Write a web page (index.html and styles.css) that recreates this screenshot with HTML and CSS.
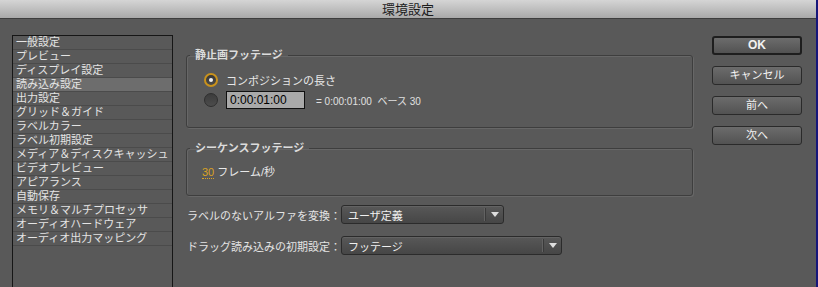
FILE: index.html
```html
<!DOCTYPE html>
<html lang="ja">

<head>
    <meta charset="UTF-8">
    <meta name="viewport" content="width=device-width, initial-scale=1.0">
    <title>環境設定</title>
    <link rel="stylesheet" href="styles.css">
</head>

<body>
    <div class="window">
        <div class="titlebar">環境設定</div>
        <div class="main">
            <!-- categorias -->
            <ul class="category-list">
                <li>一般設定</li>
                <li>プレビュー</li>
                <li>ディスプレイ設定</li>
                <li class="selected">読み込み設定</li>
                <li>出力設定</li>
                <li>グリッド＆ガイド</li>
                <li>ラベルカラー</li>
                <li>ラベル初期設定</li>
                <li>メディア＆ディスクキャッシュ</li>
                <li>ビデオプレビュー</li>
                <li>アピアランス</li>
                <li>自動保存</li>
                <li>メモリ＆マルチプロセッサ</li>
                <li>オーディオハードウェア</li>
                <li>オーディオ出力マッピング</li>
            </ul>

            <div class="panel">
                <fieldset class="group group-still">
                    <legend>静止画フッテージ</legend>
                    <div class="radio-row">
                        <span class="radio checked"></span>
                        <span class="radio-label">コンポジションの長さ</span>
                    </div>
                    <div class="radio-row">
                        <span class="radio"></span>
                        <input class="time-field" type="text" value="0:00:01:00">
                        <span class="hint">= 0:00:01:00&nbsp; ベース 30</span>
                    </div>
                </fieldset>

                <fieldset class="group group-seq">
                    <legend>シーケンスフッテージ</legend>
                    <div class="rate"><span class="rate-value">30</span> フレーム/秒</div>
                </fieldset>

                <div class="field-row">
                    <label>ラベルのないアルファを変換：</label>
                    <div class="select select-short">
                        <span class="select-text">ユーザ定義</span>
                        <span class="select-arrow"></span>
                    </div>
                </div>
                <div class="field-row">
                    <label>ドラッグ読み込みの初期設定：</label>
                    <div class="select select-long">
                        <span class="select-text">フッテージ</span>
                        <span class="select-arrow"></span>
                    </div>
                </div>
            </div>

            <div class="buttons">
                <button class="btn btn-default">OK</button>
                <button class="btn">キャンセル</button>
                <button class="btn">前へ</button>
                <button class="btn">次へ</button>
            </div>
        </div>
    </div>
</body>

</html>
```

FILE: styles.css
```css
body {
    margin: 0;
    background-color: #595959;
    font-family: "Liberation Sans", "Noto Sans CJK JP", sans-serif;
    overflow: hidden;
}

.window {
    height: 287px;
    border-right: 2px solid #16167a;
    overflow: hidden;
}

.titlebar {
    height: 18px;
    line-height: 19px;
    border-bottom: 1px solid #3d3d3d;
    background: linear-gradient(#d5d5d5, #a9a9a9);
    color: #1c1c1c;
    font-size: 13px;
    text-align: center;
}

.main {
    display: flex;
    align-items: flex-start;
}

/* lista da esquerda */
.category-list {
    list-style: none;
    margin: 16px 0 0 12px;
    padding: 0;
    width: 161px;
    height: 270px;
    box-sizing: border-box;
    border: 1px solid #161616;
}

.category-list li {
    height: 13px;
    line-height: 13px;
    border-bottom: 1px solid #4b4b4b;
    padding-left: 3px;
    color: #e4e4e4;
    font-size: 11px;
    white-space: nowrap;
    overflow: hidden;
}

.category-list li.selected {
    background-color: #6d6d6d;
}

/* painel central */
.panel {
    margin: 29px 0 0 13px;
    width: 507px;
}

.group {
    margin: 0;
    padding: 0 0 0 17px;
    border: 1px solid #3e3e3e;
    border-radius: 3px;
    box-shadow: 1px 1px 0 #676767, inset 1px 1px 0 #676767;
}

.group legend {
    margin-left: -14px;
    padding: 0 5px;
    color: #dcdcdc;
    font-size: 11px;
    font-weight: bold;
    line-height: 14px;
}

.group-still {
    padding-top: 8px;
    padding-bottom: 17px;
}

.group-seq {
    margin-top: 13px;
    padding-top: 9px;
    padding-bottom: 15px;
    padding-left: 15px;
}

.group-seq legend {
    margin-left: -12px;
}

.radio-row {
    display: flex;
    align-items: center;
    height: 20px;
    color: #e8e8e8;
    font-size: 11px;
}

.radio {
    width: 14px;
    height: 14px;
    box-sizing: border-box;
    border-radius: 50%;
    border: 1px solid #2f2f2f;
    background: linear-gradient(#3c3c3c, #4c4c4c);
    margin-right: 8px;
    position: relative;
}

.radio.checked {
    border: 2px solid #c9921c;
    background: linear-gradient(#383838, #4a4a4a);
}

.radio.checked::after {
    content: "";
    position: absolute;
    left: 3px;
    top: 3px;
    width: 4px;
    height: 4px;
    border-radius: 50%;
    background-color: #f2f2f2;
}

.time-field {
    width: 79px;
    height: 18px;
    box-sizing: border-box;
    margin: 0;
    padding: 0 0 0 3px;
    border: 1px solid #101010;
    background-color: #a9a9a9;
    color: #000;
    font-family: "Liberation Sans", sans-serif;
    font-size: 12px;
}

.hint {
    margin-left: 11px;
    font-size: 10px;
    color: #e0e0e0;
}

.rate {
    height: 16px;
    line-height: 16px;
    color: #e8e8e8;
    font-size: 11px;
}

.rate-value {
    color: #dba324;
    border-bottom: 1px dotted #dba324;
}

/* linhas com menus */
.field-row {
    display: flex;
    align-items: center;
    height: 19px;
    margin-top: 9px;
    color: #e4e4e4;
    font-size: 11px;
}

.field-row + .field-row {
    margin-top: 12px;
}

.field-row label {
    width: 154px;
    margin-left: 1px;
    white-space: nowrap;
}

.select {
    display: flex;
    align-items: center;
    height: 19px;
    box-sizing: border-box;
    border: 1px solid #2b2b2b;
    border-radius: 3px;
    background: linear-gradient(#585858, #464646);
    box-shadow: inset 0 1px 0 #636363;
}

.select-short {
    width: 163px;
}

.select-long {
    width: 221px;
}

.select-text {
    flex-grow: 1;
    padding-left: 6px;
    color: #f0f0f0;
}

.select-arrow {
    width: 17px;
    height: 13px;
    border-left: 1px solid #3a3a3a;
    box-shadow: -1px 0 0 #626262;
    display: flex;
    align-items: center;
    justify-content: center;
}

.select-arrow::after {
    content: "";
    border-left: 4px solid transparent;
    border-right: 4px solid transparent;
    border-top: 5px solid #dedede;
}

/* botoes da direita */
.buttons {
    display: flex;
    flex-direction: column;
    gap: 11px;
    margin: 17px 0 0 19px;
    width: 90px;
}

.btn {
    height: 19px;
    margin: 0;
    padding: 0;
    border: 1px solid #2a2a2a;
    border-radius: 3px;
    background: linear-gradient(#6c6c6c, #525252);
    color: #f2f2f2;
    font-family: "Liberation Sans", "Noto Sans CJK JP", sans-serif;
    font-size: 11px;
    line-height: 17px;
}

.btn-default {
    border: 2px solid #1e1e1e;
    font-weight: bold;
    font-size: 12px;
    line-height: 15px;
}
```
